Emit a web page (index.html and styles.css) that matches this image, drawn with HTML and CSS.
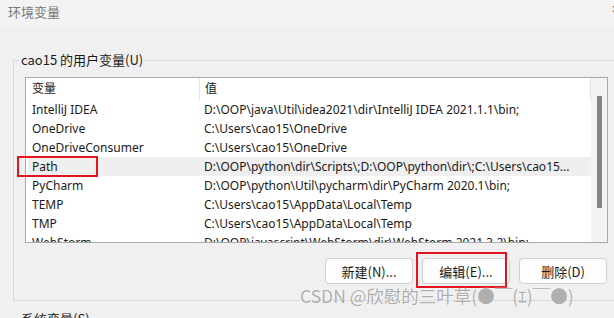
FILE: index.html
```html
<!DOCTYPE html>
<html lang="zh">
<head>
    <meta charset="UTF-8">
    <title>环境变量</title>
    <link rel="stylesheet" href="styles.css">
</head>
<body>

<!-- 标题栏 -->
<div class="titlebar">
    <span class="title">环境变量</span>
    <span class="close">✕</span>
</div>

<!-- 用户变量 -->
<fieldset class="group">
    <legend>cao15 的用户变量(U)</legend>
    <div class="listbox">
        <div class="list">
            <div class="row head">
                <div class="name">变量</div>
                <div class="value">值</div>
            </div>
            <div class="row">
                <div class="name">IntelliJ IDEA</div>
                <div class="value">D:\OOP\java\Util\idea2021\dir\IntelliJ IDEA 2021.1.1\bin;</div>
            </div>
            <div class="row">
                <div class="name">OneDrive</div>
                <div class="value">C:\Users\cao15\OneDrive</div>
            </div>
            <div class="row">
                <div class="name">OneDriveConsumer</div>
                <div class="value">C:\Users\cao15\OneDrive</div>
            </div>
            <div class="row selected">
                <div class="name">Path</div>
                <div class="value">D:\OOP\python\dir\Scripts\;D:\OOP\python\dir\;C:\Users\cao15...</div>
            </div>
            <div class="row">
                <div class="name">PyCharm</div>
                <div class="value">D:\OOP\python\Util\pycharm\dir\PyCharm 2020.1\bin;</div>
            </div>
            <div class="row">
                <div class="name">TEMP</div>
                <div class="value">C:\Users\cao15\AppData\Local\Temp</div>
            </div>
            <div class="row">
                <div class="name">TMP</div>
                <div class="value">C:\Users\cao15\AppData\Local\Temp</div>
            </div>
            <div class="row">
                <div class="name">WebStorm</div>
                <div class="value">D:\OOP\javascript\WebStorm\dir\WebStorm 2021.3.2\bin;</div>
            </div>
        </div>
        <div class="scrollbar"><div class="thumb"></div></div>
    </div>
    <div class="buttons">
        <button class="btn">新建(N)...</button>
        <button class="btn">编辑(E)...</button>
        <button class="btn">删除(D)</button>
    </div>
</fieldset>

<!-- 系统变量 -->
<fieldset class="group">
    <legend>系统变量(S)</legend>
</fieldset>

<!-- 红框标注 -->
<div class="mark mark-path"></div>
<div class="mark mark-edit"></div>

<!-- 水印 -->
<div class="watermark">CSDN @欣慰的三叶草(●￣(ｴ)￣●)</div>

</body>
</html>
```

FILE: styles.css
```css
/* 页面整体 */
body {
    margin: 0;
    width: 614px;
    height: 318px;
    overflow: hidden;
    position: relative;
    background-color: #f0f0f0;
    font-family: "Noto Sans", "Noto Sans CJK SC", sans-serif;
    font-size: 12px;
    color: #1a1a1a;
}

/* 标题栏 */
.titlebar {
    height: 27px;
    background-color: #f3f3f3;
    display: flex;
    align-items: center;
    justify-content: space-between;
    padding-left: 8px;
}
.title {
    font-family: "Noto Sans CJK SC", sans-serif;
    font-size: 13px;
    color: #777;
    margin-top: -5px;
}
.close {
    font-size: 11px;
    color: #888;
    margin-right: -6px;
    margin-top: -10px;
}

/* 分组框 */
.group {
    margin: 25px -10px 0 13px;
    padding: 9px 0 16px 11px;
    border: 1px solid #d9d9d9;
    min-width: 0;
}
.group + .group {
    margin-top: 10px;
}
.group legend {
    font-family: "Noto Sans CJK SC", sans-serif;
    font-size: 13px;
    line-height: 16px;
    padding: 0 2px;
    margin-left: -6px;
    color: #1a1a1a;
}

/* 列表框 */
.listbox {
    width: 581px;
    height: 164px;
    border: 1px solid #aaa;
    background-color: #fff;
    display: flex;
    overflow: hidden;
}
.list {
    flex: 1;
    overflow: hidden;
}
.row {
    display: flex;
    height: 19px;
    line-height: 19px;
    white-space: nowrap;
}
.row.head {
    height: 22px;
    line-height: 22px;
}
.row.head .name,
.row.head .value {
    border-right: 1px solid #e5e5e5;
}
.row.selected {
    background-color: #efefef;
    margin-left: 2px;
}
.name {
    width: 167px;
    padding-left: 6px;
    flex-shrink: 0;
    overflow: hidden;
}
.value {
    flex: 1;
    padding-left: 5px;
    overflow: hidden;
}
.row.selected .name {
    padding-left: 4px;
}

/* 滚动条 */
.scrollbar {
    width: 16px;
    background-color: #f3f3f3;
    display: flex;
    justify-content: center;
}
.thumb {
    width: 5px;
    height: 112px;
    margin-top: 18px;
    background-color: #858585;
    border-radius: 1px;
}

/* 按钮 */
.buttons {
    display: flex;
    justify-content: flex-end;
    gap: 9px;
    margin-top: 15px;
    width: 582px;
}
.btn {
    width: 88px;
    height: 26px;
    border: 1px solid #d0d0d0;
    border-radius: 4px;
    background-color: #fdfdfd;
    font-family: "Noto Sans CJK SC", sans-serif;
    font-size: 13px;
    color: #1a1a1a;
    padding: 0;
}

/* 红框标注 */
.mark {
    position: absolute;
    border: 2px solid #e3141d;
}
.mark-path {
    left: 17px;
    top: 156px;
    width: 77px;
    height: 17px;
}
.mark-edit {
    left: 416px;
    top: 252px;
    width: 87px;
    height: 32px;
}

/* 水印 */
.watermark {
    position: absolute;
    left: 300px;
    top: 285px;
    font-family: "Noto Sans CJK SC", sans-serif;
    font-size: 17.5px;
    line-height: 22px;
    color: rgba(140, 140, 140, 0.7);
    text-shadow: 0 0 2px #fff;
    white-space: nowrap;
}
```
